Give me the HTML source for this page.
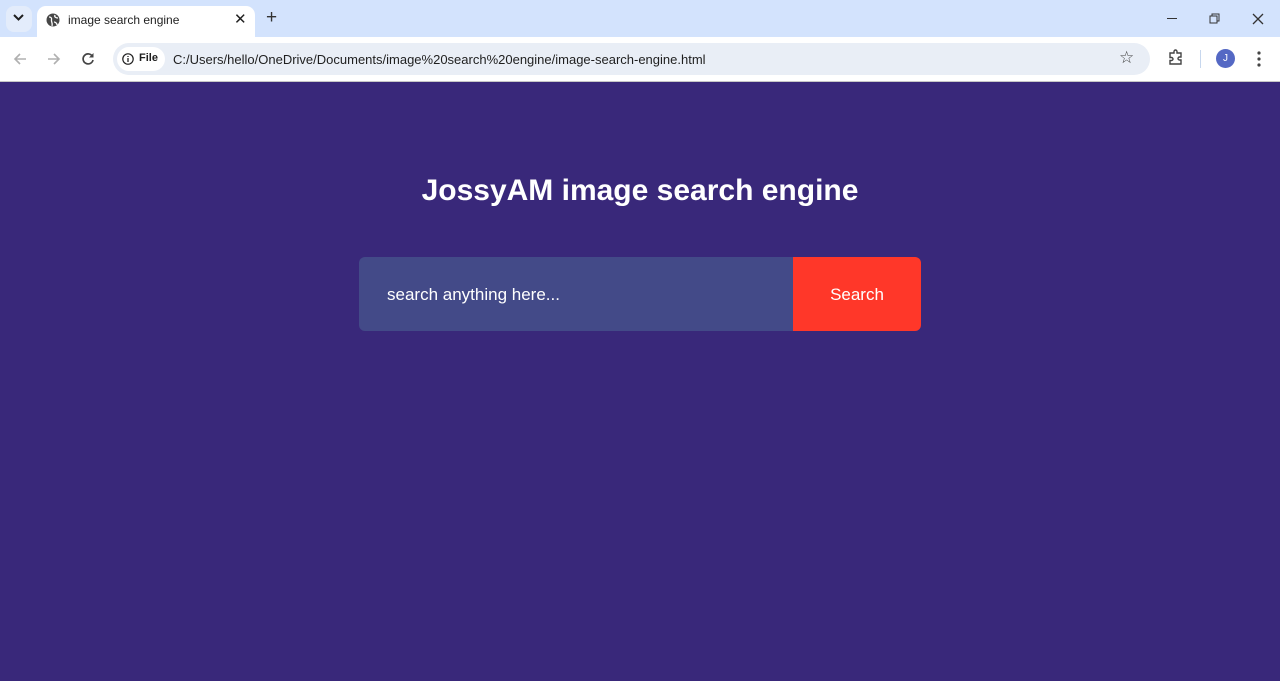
<!DOCTYPE html>
<html><head><meta charset="utf-8"><style>
*{margin:0;padding:0;box-sizing:border-box}
body{width:1280px;height:681px;overflow:hidden;font-family:"Liberation Sans",Arial,sans-serif;background:#39287a;position:relative}
.top{position:absolute;left:0;top:0;width:1280px;height:37px;background:#d3e3fd}
.tab{position:absolute;left:37px;top:6px;width:218px;height:32px;background:#fff;border-radius:9px 9px 0 0}
.tab span{position:absolute;left:31px;top:7px;font-size:12px;color:#1f1f1f}
.bar{position:absolute;left:0;top:37px;width:1280px;height:45px;background:#fff;border-bottom:1px solid #c7c7c7}
.omni{position:absolute;left:113px;top:6px;width:1037px;height:32px;background:#e9eef6;border-radius:16px}
.chip{position:absolute;left:4px;top:4px;width:48px;height:24px;background:#fff;border-radius:12px;font-size:11px;font-weight:bold;color:#1f1f1f}
.url{position:absolute;left:60px;top:9px;font-size:13px;color:#1f1f1f}
.ic{position:absolute;color:#444;font-size:16px}
h1{position:absolute;top:174px;left:0;width:1280px;text-align:center;color:#fff;font-size:30px;font-weight:bold}
.inp{position:absolute;left:359px;top:257px;width:434px;height:74px;background:#434a88;border-radius:6px 0 0 6px;color:#fff;font-size:17px;padding:28px 0 0 28px}
.btn{position:absolute;left:793px;top:257px;width:128px;height:74px;background:#ff3729;border-radius:0 6px 6px 0;color:#fff;font-size:17px;text-align:center;padding-top:28px}
</style></head><body>
<div class="top">
 <div style="position:absolute;left:6px;top:6px;width:26px;height:26px;background:#e3ecfb;border-radius:8px"></div>
 <svg style="position:absolute;left:13px;top:14px" width="11" height="8"><path d="M1 1l4.5 4.5L10 1" stroke="#1f1f1f" stroke-width="2" fill="none"/></svg>
 <div class="tab">
  <svg style="position:absolute;left:9px;top:7px" width="14" height="14"><circle cx="7" cy="7" r="6.5" fill="#474747"/><path d="M3 4c2 0 3 1 2.5 3S7 10 6 13M9 2c-1 2 1 3 3 3M8 9c1 0 3 1 3 3" stroke="#fff" stroke-width="1.3" fill="none"/></svg>
  <span>image search engine</span>
  <div style="position:absolute;left:197px;top:4px;font-size:15px;color:#1f1f1f">✕</div>
 </div>
 <div style="position:absolute;left:266px;top:7px;font-size:19px;color:#333">+</div>
 <div style="position:absolute;left:1167px;top:18px;width:10px;height:1px;background:#333"></div>
 <svg style="position:absolute;left:1209px;top:13px" width="12" height="12"><rect x="1" y="3" width="7" height="7" fill="none" stroke="#333"/><path d="M3 3V1h7v7H8" fill="none" stroke="#333"/></svg>
 <svg style="position:absolute;left:1252px;top:13px" width="12" height="12"><path d="M1 1l10 10M11 1L1 11" stroke="#333" stroke-width="1.3"/></svg>
</div>
<div class="bar">
 <svg style="position:absolute;left:13px;top:15px" width="14" height="14"><path d="M13 7H2M7 2L2 7l5 5" stroke="#b0b0b0" stroke-width="1.6" fill="none"/></svg>
 <svg style="position:absolute;left:47px;top:15px" width="14" height="14"><path d="M1 7h11M7 2l5 5-5 5" stroke="#b0b0b0" stroke-width="1.6" fill="none"/></svg>
 <svg style="position:absolute;left:81px;top:15px" width="14" height="14"><path d="M11.5 4.5A5 5 0 1 0 12 8" stroke="#444" stroke-width="1.7" fill="none"/><path d="M12.5 1v4.5H8" fill="#444"/></svg>
 <div class="omni">
  <div class="chip"><svg style="position:absolute;left:5px;top:6px" width="12" height="12"><circle cx="6" cy="6" r="5.2" fill="none" stroke="#1f1f1f" stroke-width="1.2"/><path d="M6 5v4M6 3v1" stroke="#1f1f1f" stroke-width="1.3"/></svg><span style="position:absolute;left:22px;top:5px">File</span></div>
  <div class="url">C:/Users/hello/OneDrive/Documents/image%20search%20engine/image-search-engine.html</div>
  <div class="ic" style="left:1006px;top:5px;font-size:17px">☆</div>
 </div>
 <svg style="position:absolute;left:1167px;top:12px" width="18" height="18"><path d="M3 4h4V2.5a1.5 1.5 0 0 1 3 0V4h4v4h-1.5a1.5 1.5 0 0 0 0 3H14v4H3v-3.5h1.5a1.5 1.5 0 0 0 0-3H3z" fill="none" stroke="#444" stroke-width="1.4"/></svg>
 <div style="position:absolute;left:1200px;top:13px;width:1px;height:18px;background:#c7d7ee"></div>
 <div style="position:absolute;left:1216px;top:12px;width:19px;height:19px;border-radius:50%;background:#5468c4;color:#fff;font-size:10px;text-align:center;line-height:19px">J</div>
 <svg style="position:absolute;left:1257px;top:14px" width="4" height="16"><circle cx="2" cy="2" r="1.6" fill="#444"/><circle cx="2" cy="8" r="1.6" fill="#444"/><circle cx="2" cy="14" r="1.6" fill="#444"/></svg>
</div>
<h1>JossyAM image search engine</h1>
<div class="inp">search anything here...</div>
<div class="btn">Search</div>
</body></html>
